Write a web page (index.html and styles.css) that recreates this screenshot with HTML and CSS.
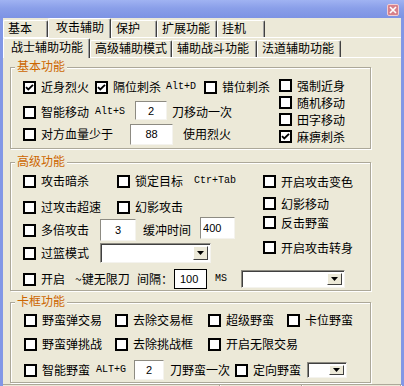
FILE: index.html
```html
<!DOCTYPE html>
<html lang="zh-CN">
  <head>
    <meta charset="UTF-8" />
    <title>攻击辅助</title>
    <link rel="stylesheet" href="styles.css">
  </head>
  <body>
    <div class="window">
      <div class="titlebar">
        <span class="close">
          <svg width="8" height="8" viewBox="0 0 8 8"><path d="M1 1L7 7M7 1L1 7" stroke="#fff" stroke-width="1.6"/></svg>
        </span>
      </div>
      <div class="frame">
        <div class="tabs">
          <span class="tab w45">基本</span>
          <span class="tab active w63">攻击辅助</span>
          <span class="tab w46">保护</span>
          <span class="tab w60">扩展功能</span>
          <span class="tab w48">挂机</span>
        </div>
        <div class="tabs">
          <span class="tab active w87">战士辅助功能</span>
          <span class="tab w82">高级辅助模式</span>
          <span class="tab w85">辅助战斗功能</span>
          <span class="tab w84">法道辅助功能</span>
        </div>

        <!-- 基本功能 -->
        <div class="group g-basic">
          <div class="group-title">基本功能</div>
          <div class="basic-body">
            <div class="basic-left">
              <div class="row mt4">
                <label class="check cell-72"><span class="cb"><svg width="9" height="9" viewBox="0 0 9 9"><path d="M1 4.2L3.3 6.5L8 1.8" fill="none" stroke="#000" stroke-width="1.9"/></svg></span>近身烈火</label>
                <label class="check"><span class="cb"><svg width="9" height="9" viewBox="0 0 9 9"><path d="M1 4.2L3.3 6.5L8 1.8" fill="none" stroke="#000" stroke-width="1.9"/></svg></span>隔位刺杀</label>
                <span class="key ml5">Alt+D</span>
                <label class="check ml8"><span class="cb"></span>错位刺杀</label>
              </div>
              <div class="row mt5">
                <label class="check cell-72"><span class="cb"></span>智能移动</label>
                <span class="key">Alt+S</span>
                <input class="num n-move ml10" value="2">
                <span class="ml5">刀移动一次</span>
              </div>
              <div class="row mt2">
                <label class="check cell-107"><span class="cb"></span>对方血量少于</label>
                <input class="num n-blood" value="88">
                <span class="ml10">使用烈火</span>
              </div>
            </div>
            <div class="col-right">
              <label class="check item mt5"><span class="cb"></span>强制近身</label>
              <label class="check item mt3"><span class="cb"></span>随机移动</label>
              <label class="check item mt3"><span class="cb"></span>田字移动</label>
              <label class="check item mt3"><span class="cb"><svg width="9" height="9" viewBox="0 0 9 9"><path d="M1 4.2L3.3 6.5L8 1.8" fill="none" stroke="#000" stroke-width="1.9"/></svg></span>麻痹刺杀</label>
            </div>
          </div>
        </div>

        <!-- 高级功能 -->
        <div class="group g-adv">
          <div class="group-title">高级功能</div>
          <div class="adv-top">
            <div class="adv-left">
              <div class="row tall mt2">
                <label class="check cell-94"><span class="cb"></span>攻击暗杀</label>
                <label class="check"><span class="cb"></span>锁定目标</label>
                <span class="key ml11">Ctr+Tab</span>
              </div>
              <div class="row tall mt4">
                <label class="check cell-94"><span class="cb"></span>过攻击超速</label>
                <label class="check"><span class="cb"></span>幻影攻击</label>
              </div>
              <div class="row tall mt1">
                <label class="check cell-77"><span class="cb"></span>多倍攻击</label>
                <input class="num n-times" value="3">
                <span class="ml7">缓冲时间</span>
                <input class="num n-delay ml9" value="400">
              </div>
              <div class="row tall mt1">
                <label class="check cell-77"><span class="cb"></span>过篮模式</label>
                <div class="combo c-mode"><span class="btn"><svg width="7" height="4" viewBox="0 0 7 4"><path d="M0 0H7L3.5 4Z"/></svg></span></div>
              </div>
            </div>
            <div class="col-right">
              <label class="check item mt6"><span class="cb"></span>开启攻击变色</label>
              <label class="check item mt8"><span class="cb"></span>幻影移动</label>
              <label class="check item mt5"><span class="cb"></span>反击野蛮</label>
              <label class="check item mt11"><span class="cb"></span>开启攻击转身</label>
            </div>
          </div>
          <div class="row tall mt4 pad12">
            <label class="check cell-114"><span class="cb"></span>开启 <span class="ml5">~键无限刀</span></label>
            <span class="cell-37">间隔：</span>
            <input class="num n-gap" value="100">
            <span class="key ml8">MS</span>
            <div class="combo c-ms ml14"><span class="btn"><svg width="7" height="4" viewBox="0 0 7 4"><path d="M0 0H7L3.5 4Z"/></svg></span></div>
          </div>
        </div>

        <!-- 卡框功能 -->
        <div class="group g-card">
          <div class="group-title">卡框功能</div>
          <div class="card-grid">
            <label class="check"><span class="cb"></span>野蛮弹交易</label>
            <label class="check"><span class="cb"></span>去除交易框</label>
            <label class="check"><span class="cb"></span>超级野蛮</label>
            <label class="check"><span class="cb"></span>卡位野蛮</label>
            <label class="check"><span class="cb"></span>野蛮弹挑战</label>
            <label class="check"><span class="cb"></span>去除挑战框</label>
            <label class="check"><span class="cb"></span>开启无限交易</label>
          </div>
          <div class="row mt6 pad13">
            <label class="check cell-72"><span class="cb"></span>智能野蛮</label>
            <span class="key">ALT+G</span>
            <input class="num n-axe ml8" value="2">
            <span class="ml6">刀野蛮一次</span>
            <label class="check ml5"><span class="cb"></span>定向野蛮</label>
            <div class="combo c-dir ml6"><span class="btn"><svg width="7" height="4" viewBox="0 0 7 4"><path d="M0 0H7L3.5 4Z"/></svg></span></div>
          </div>
        </div>

        <div class="status">
          <span class="s1"></span>
          <span class="s2"></span>
          <span class="s3"></span>
        </div>
      </div>
    </div>
  </body>
</html>
```

FILE: styles.css
```css
* {
  box-sizing: border-box;
}
body {
  margin: 0;
  font-family: "Noto Sans CJK SC", "Liberation Sans", sans-serif;
  font-size: 12px;
  line-height: 14px;
  color: #000;
}
.window {
  width: 404px;
  height: 386px;
  overflow: hidden;
  background: #ece9d8;
}
.titlebar {
  height: 18px;
  display: flex;
  justify-content: flex-end;
  padding: 4px 5px 0 0;
  background: linear-gradient(#a0b3f2, #8a9fe9 45%, #7d93e4);
}
.close {
  width: 12px;
  height: 12px;
  border: 1px solid #f2cdd1;
  border-radius: 2px;
  background: #d7808a;
  display: flex;
  align-items: center;
  justify-content: center;
}
.frame {
  height: 368px;
  border-left: 3px solid #8297e6;
  border-right: 3px solid #8297e6;
}

/* tabs */
.tabs {
  display: flex;
  align-items: flex-end;
  height: 20px;
  box-shadow: inset 0 -1px 0 #fff;
}
.tab {
  height: 17px;
  margin-bottom: 1px;
  padding-left: 4px;
  line-height: 14px;
  background: #ece9d8;
  border: 1px solid #fff;
  border-bottom: none;
  border-right-color: #404040;
  box-shadow: inset -1px 0 0 #a0a0a0;
  border-radius: 2px 2px 0 0;
  white-space: nowrap;
}
.tab.active {
  height: 20px;
  margin-bottom: 0;
  padding-left: 7px;
  line-height: 16px;
  position: relative;
  z-index: 1;
}
.w45 { width: 45px; }
.w46 { width: 46px; }
.w48 { width: 48px; }
.w60 { width: 60px; }
.w63 { width: 63px; }
.w82 { width: 82px; }
.w84 { width: 84px; }
.w85 { width: 85px; }
.w87 { width: 87px; }

/* group boxes */
.group {
  margin-left: 7px;
  width: 361px;
  border: 1px solid #aca899;
  box-shadow: inset 1px 1px 0 #fff, 1px 1px 0 #fff;
}
.group-title {
  width: max-content;
  height: 14px;
  line-height: 14px;
  margin: -9px 0 0 4px;
  padding: 0 2px;
  background: #ece9d8;
  color: #cc6600;
}
.g-basic { margin-top: 9px; height: 82px; }
.g-adv { margin-top: 13px; height: 129px; }
.g-card { margin-top: 11px; height: 81px; }

.basic-body {
  display: flex;
}
.basic-left {
  width: 268px;
  padding-left: 12px;
}
.adv-top {
  display: flex;
}
.adv-left {
  width: 252px;
  padding-left: 12px;
}
.col-right {
  display: flex;
  flex-direction: column;
}
.card-grid {
  display: grid;
  grid-template-columns: 91px 93px 79px auto;
  grid-auto-rows: 20px;
  row-gap: 4px;
  margin-top: 2px;
  padding-left: 13px;
}

.row {
  display: flex;
  align-items: center;
  height: 20px;
  white-space: nowrap;
}
.row.tall { height: 22px; }
.pad12 { padding-left: 12px; }
.pad13 { padding-left: 13px; }
.item { height: 14px; line-height: 13px; }

/* checkbox */
.check {
  display: flex;
  align-items: center;
  gap: 5px;
  white-space: nowrap;
}
.cb {
  flex: none;
  width: 13px;
  height: 13px;
  border: 2px solid #000;
  background: #fff;
  display: flex;
}
.cell-72 { width: 72px; }
.cell-77 { width: 77px; }
.cell-94 { width: 94px; }
.cell-107 { width: 107px; }
.cell-114 { width: 114px; gap: 5px; }
.cell-37 { width: 37px; }

.key {
  font-family: "Liberation Mono", monospace;
  font-size: 10px;
}

/* text boxes */
.num {
  flex: none;
  height: 20px;
  padding: 0;
  border: 1px solid;
  border-color: #8d8b82 #f4f3ee #f4f3ee #8d8b82;
  background: #fff;
  font-family: "Liberation Sans", sans-serif;
  font-size: 11px;
  text-align: center;
  color: #000;
}
.n-move { width: 32px; height: 19px; margin-top: -3px; }
.n-blood { width: 43px; height: 21px; }
.n-times { width: 36px; height: 22px; }
.n-delay { width: 35px; height: 22px; margin-top: -4px; text-align: left; padding-left: 2px; }
.n-gap { width: 33px; border: 1px solid #000; text-align: left; padding-left: 5px; }
.n-axe { width: 30px; }

/* drop-down boxes */
.combo {
  flex: none;
  display: flex;
  justify-content: flex-end;
  padding: 2px;
  background: #fff;
  border: 1px solid;
  border-color: #8d8b82 #f4f3ee #f4f3ee #8d8b82;
  box-shadow: inset 1px 1px 0 #404040;
}
.combo .btn {
  width: 15px;
  height: 100%;
  display: flex;
  align-items: center;
  justify-content: center;
  background: #ece9d8;
  border: 1px solid;
  border-color: #fff #404040 #404040 #fff;
}
.c-mode { width: 111px; height: 20px; }
.c-ms { width: 104px; height: 18px; }
.c-dir { width: 40px; height: 16px; }

.status {
  display: flex;
  height: 4px;
  margin-top: 1px;
  border-top: 1px solid #aca899;
}
.status span {
  border-right: 1px solid #aca899;
  box-shadow: 1px 0 0 #fff;
}
.s1 { width: 217px; }
.s2 { width: 82px; }
.s3 { flex: 1; border-right: none; }

.mt1 { margin-top: 1px; }
.mt2 { margin-top: 2px; }
.mt3 { margin-top: 3px; }
.mt4 { margin-top: 4px; }
.mt5 { margin-top: 5px; }
.mt6 { margin-top: 6px; }
.mt7 { margin-top: 7px; }
.mt8 { margin-top: 8px; }
.mt11 { margin-top: 11px; }
.ml5 { margin-left: 5px; }
.ml6 { margin-left: 6px; }
.ml7 { margin-left: 7px; }
.ml8 { margin-left: 8px; }
.ml9 { margin-left: 9px; }
.ml10 { margin-left: 10px; }
.ml11 { margin-left: 11px; }
.ml14 { margin-left: 14px; }
```
